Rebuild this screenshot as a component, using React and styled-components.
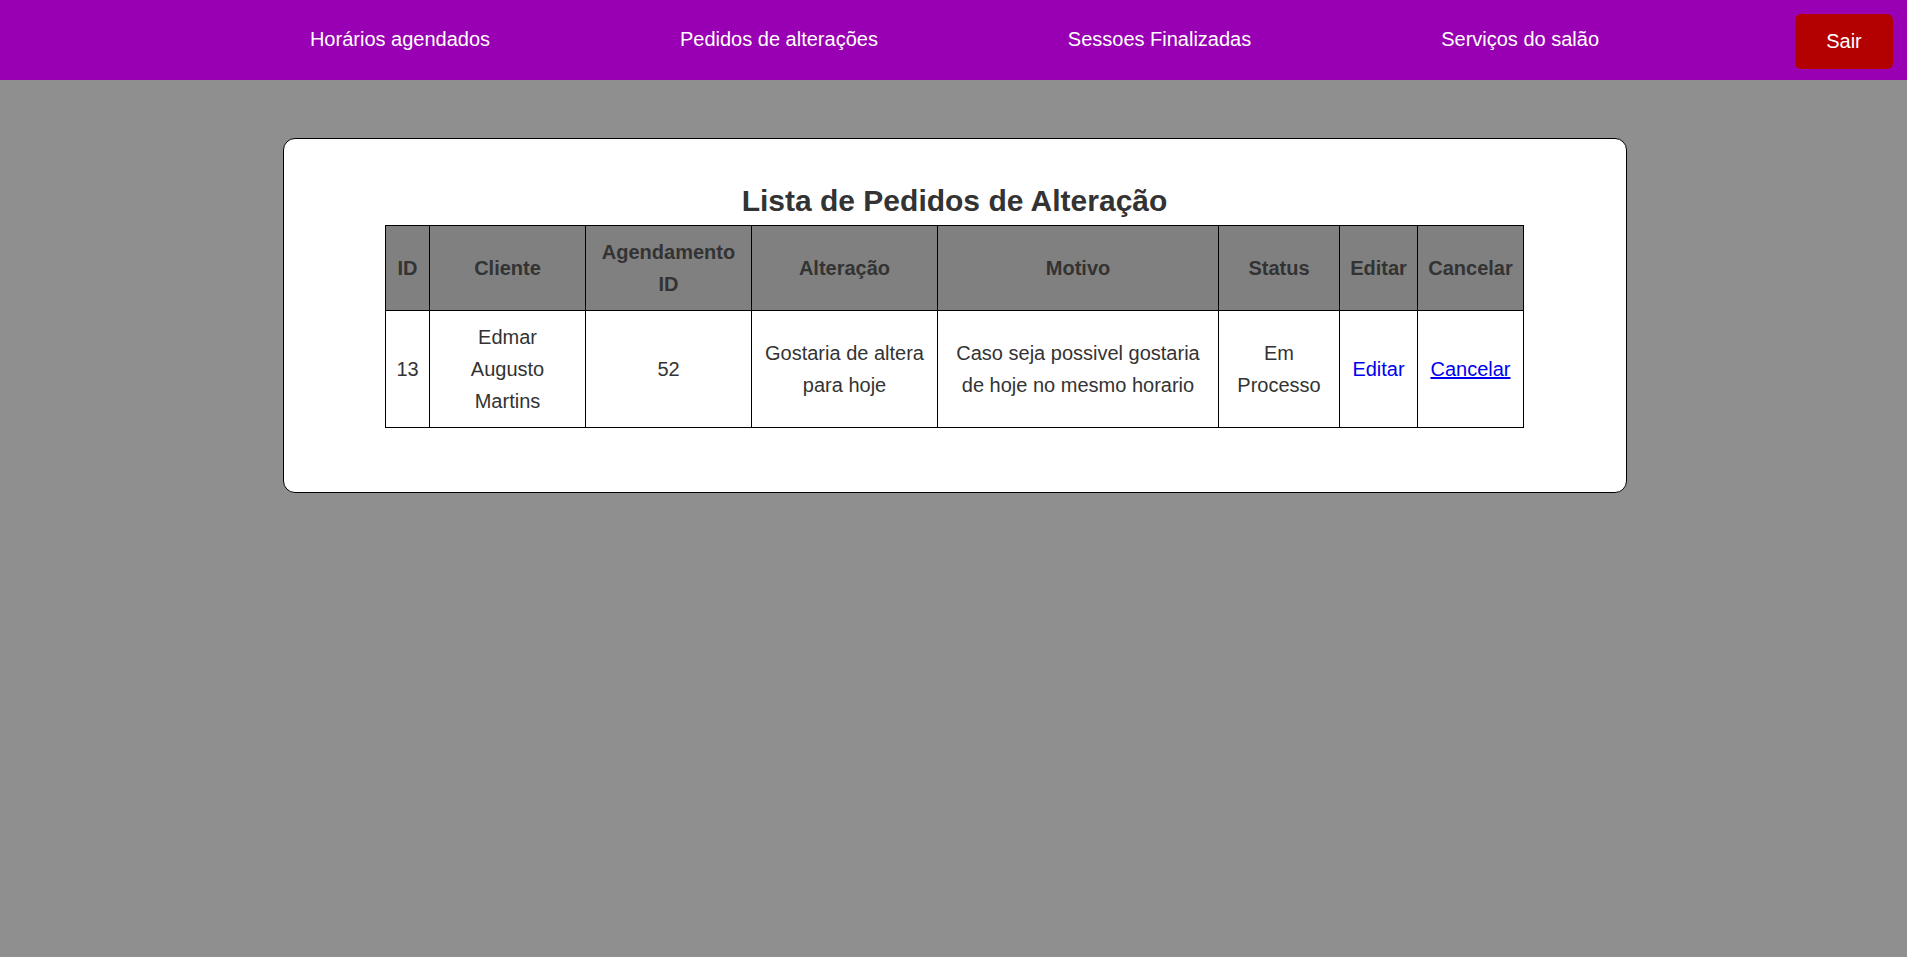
import React from "react";
import styled, { createGlobalStyle } from "styled-components";

const GlobalStyle = createGlobalStyle`
  html, body {
    margin: 0;
    padding: 0;
    background: #8f8f8f;
    font-family: "Liberation Sans", Arial, sans-serif;
    color: #333;
  }
  body {
    min-height: 100vh;
  }
`;

const NavBar = styled.nav`
  height: 80px;
  background: #9900b3;
  display: flex;
  align-items: center;
  padding: 0 14px 0 120px;
  box-sizing: border-box;
`;

const NavList = styled.ul`
  flex: 1;
  display: flex;
  justify-content: space-evenly;
  align-items: center;
  list-style: none;
  margin: 0 6px 2px 0;
  padding: 0;
`;

const NavItem = styled.li`
  font-size: 20px;
`;

const NavLink = styled.a`
  color: #fff;
  text-decoration: none;
  white-space: nowrap;
`;

const SairButton = styled.button`
  margin-top: 3px;
  width: 98px;
  height: 55px;
  background: #b30000;
  color: #fff;
  border: none;
  border-radius: 6px;
  font-family: "Liberation Sans", Arial, sans-serif;
  font-size: 20px;
  cursor: pointer;
`;

const Main = styled.main`
  display: flex;
  justify-content: center;
  padding: 58px 0 0 2px;
`;

const Card = styled.section`
  width: 1344px;
  box-sizing: border-box;
  background: #fff;
  border: 1px solid #000;
  border-radius: 12px;
  padding: 44px 0 64px;
`;

const Title = styled.h2`
  margin: 0 0 6px;
  text-align: center;
  font-size: 30px;
  line-height: 36px;
  font-weight: bold;
  color: #333;
`;

const Table = styled.table`
  margin: 0 auto;
  width: 1138px;
  table-layout: fixed;
  border-collapse: collapse;
  font-size: 20px;
  line-height: 32px;
  text-align: center;
  color: #333;
`;

const Th = styled.th`
  background: #808080;
  border: 1px solid #000;
  padding: 10px;
  font-weight: bold;
`;

const Td = styled.td`
  border: 1px solid #000;
  padding: 10px;
`;

const EditLink = styled.a`
  color: #0000ee;
  text-decoration: ${(p) => (p.underline ? "underline" : "none")};
  cursor: pointer;
`;

const columns = [
  { label: "ID", width: 44 },
  { label: "Cliente", width: 156 },
  { label: "Agendamento ID", width: 166 },
  { label: "Alteração", width: 186 },
  { label: "Motivo", width: 281 },
  { label: "Status", width: 121 },
  { label: "Editar", width: 78 },
  { label: "Cancelar", width: 106 },
];

const pedidos = [
  {
    id: 13,
    cliente: "Edmar Augusto Martins",
    agendamento: 52,
    alteracao: "Gostaria de altera para hoje",
    motivo: "Caso seja possivel gostaria de hoje no mesmo horario",
    status: "Em Processo",
  },
];

const links = [
  "Horários agendados",
  "Pedidos de alterações",
  "Sessoes Finalizadas",
  "Serviços do salão",
];

export default function App() {
  return (
    <>
      <GlobalStyle />
      <NavBar>
        <NavList>
          {links.map((l) => (
            <NavItem key={l}>
              <NavLink href="#">{l}</NavLink>
            </NavItem>
          ))}
        </NavList>
        <SairButton>Sair</SairButton>
      </NavBar>
      <Main>
        <Card>
          <Title>Lista de Pedidos de Alteração</Title>
          <Table>
            <colgroup>
              {columns.map((c) => (
                <col key={c.label} style={{ width: c.width }} />
              ))}
            </colgroup>
            <thead>
              <tr>
                {columns.map((c) => (
                  <Th key={c.label}>{c.label}</Th>
                ))}
              </tr>
            </thead>
            <tbody>
              {pedidos.map((p) => (
                <tr key={p.id}>
                  <Td>{p.id}</Td>
                  <Td>{p.cliente}</Td>
                  <Td>{p.agendamento}</Td>
                  <Td>{p.alteracao}</Td>
                  <Td>{p.motivo}</Td>
                  <Td>{p.status}</Td>
                  <Td>
                    <EditLink>Editar</EditLink>
                  </Td>
                  <Td>
                    <EditLink href="#" underline>
                      Cancelar
                    </EditLink>
                  </Td>
                </tr>
              ))}
            </tbody>
          </Table>
        </Card>
      </Main>
    </>
  );
}
